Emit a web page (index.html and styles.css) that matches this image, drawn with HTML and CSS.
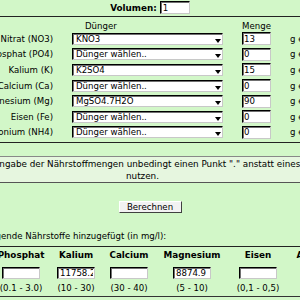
FILE: index.html
```html
<!doctype html>
<html lang="de">
<head>
    <meta charset="UTF-8">
    <title>Dünger-Rechner</title>
    <link rel="stylesheet" href="styles.css">
</head>
<body>
    <div class="page">
        <div class="volume">
            <b>Volumen:</b>
            <input class="box vol-input" type="text" value="1">
        </div>

        <div class="fert">
            <div class="fert-head">
                <span></span>
                <span class="head-duenger">Dünger</span>
                <span class="head-menge">Menge</span>
                <span></span>
            </div>
            <div class="fert-row">
                <label>Nitrat (NO3)</label>
                <span class="pick"><select class="box"><option>KNO3</option></select></span>
                <input class="box amount" type="text" value="13">
                <span class="unit">g einwiegen</span>
            </div>
            <div class="fert-row">
                <label>Phosphat (PO4)</label>
                <span class="pick"><select class="box"><option>Dünger wählen..</option></select></span>
                <input class="box amount" type="text" value="0">
                <span class="unit">g einwiegen</span>
            </div>
            <div class="fert-row">
                <label>Kalium (K)</label>
                <span class="pick"><select class="box"><option>K2SO4</option></select></span>
                <input class="box amount" type="text" value="15">
                <span class="unit">g einwiegen</span>
            </div>
            <div class="fert-row">
                <label>Calcium (Ca)</label>
                <span class="pick"><select class="box"><option>Dünger wählen..</option></select></span>
                <input class="box amount" type="text" value="0">
                <span class="unit">g einwiegen</span>
            </div>
            <div class="fert-row">
                <label>Magnesium (Mg)</label>
                <span class="pick"><select class="box"><option>MgSO4.7H2O</option></select></span>
                <input class="box amount" type="text" value="90">
                <span class="unit">g einwiegen</span>
            </div>
            <div class="fert-row">
                <label>Eisen (Fe)</label>
                <span class="pick"><select class="box"><option>Dünger wählen..</option></select></span>
                <input class="box amount" type="text" value="0">
                <span class="unit">g einwiegen</span>
            </div>
            <div class="fert-row">
                <label>Ammonium (NH4)</label>
                <span class="pick"><select class="box"><option>Dünger wählen..</option></select></span>
                <input class="box amount" type="text" value="0">
                <span class="unit">g einwiegen</span>
            </div>
        </div>

        <div class="note">
            <span class="note-first">Bitte bei der Eingabe der Nährstoffmengen unbedingt einen Punkt "." anstatt eines Kommas zu</span>
            <span class="note-last">nutzen.</span>
        </div>

        <div class="actions">
            <button class="btn" type="button">Berechnen</button>
        </div>

        <p class="result-title">Es wurden folgende Nährstoffe hinzugefügt (in mg/l):</p>

        <div class="results">
            <div class="res res-po">
                <h4>Phosphat</h4>
                <input class="box res-input" type="text" value="">
                <span>(0.1 - 3.0)</span>
            </div>
            <div class="res res-k">
                <h4>Kalium</h4>
                <input class="box res-input" type="text" value="11758.2">
                <span>(10 - 30)</span>
            </div>
            <div class="res res-ca">
                <h4>Calcium</h4>
                <input class="box res-input" type="text" value="">
                <span>(30 - 40)</span>
            </div>
            <div class="res res-mg">
                <h4>Magnesium</h4>
                <input class="box res-input" type="text" value="8874.9">
                <span>(5 - 10)</span>
            </div>
            <div class="res res-fe">
                <h4>Eisen</h4>
                <input class="box res-input" type="text" value="">
                <span>(0,1 - 0,5)</span>
            </div>
            <div class="res res-nh">
                <h4>Ammonium</h4>
                <input class="box res-input" type="text" value="">
                <span>(0 - 0,5)</span>
            </div>
        </div>
    </div>
</body>
</html>
```

FILE: styles.css
```css
*{
    margin:0;
    padding:0;
    box-sizing:border-box;
}
body{
    background:#d2f7c8;
    font-family:"DejaVu Sans", Verdana, sans-serif;
    font-size:8.6px;
    color:#000;
    overflow:hidden;
}
.page{
    width:500px;
    margin-left:-100px;
}

/* eingabefelder im alten windows-look */
.box{
    font-family:inherit;
    font-size:8.6px;
    color:#000;
    background:#fff;
    border:1px solid;
    border-color:#000 #c8c8c8 #c8c8c8 #000;
    box-shadow:inset 1px 1px 0 #707070;
    outline:none;
}

.volume{
    height:17px;
    border-bottom:1px solid #222;
    display:flex;
    justify-content:center;
    align-items:center;
    gap:3px;
    padding-bottom:1px;
}
.volume b{
    font-size:8.8px;
}
.vol-input{
    width:30px;
    height:13px;
    padding:0 2px;
}

.fert{
    padding-bottom:2px;
    border-bottom:1px solid #222;
}
.fert-head,
.fert-row{
    display:grid;
    grid-template-columns:153px 151px 29px 1fr;
    column-gap:19px;
    align-items:center;
}
.fert-head{
    height:14px;
    padding-top:4px;
    line-height:10px;
}
.head-duenger{
    padding-left:13px;
}
.head-menge{
    text-align:center;
}
.fert-row{
    height:15.6px;
}
.fert-row label{
    text-align:right;
    white-space:nowrap;
}
.pick{
    position:relative;
    display:block;
    height:12px;
}
.pick select{
    appearance:none;
    -webkit-appearance:none;
    display:block;
    width:151px;
    height:12px;
    padding:0 0 0 3px;
    line-height:10px;
    border-radius:0;
}
.pick::after{
    content:"";
    position:absolute;
    right:2px;
    top:6px;
    border-left:3px solid transparent;
    border-right:3px solid transparent;
    border-top:4px solid #000;
}
.amount{
    width:29px;
    height:13px;
    padding:0 1px;
}
.unit{
    white-space:nowrap;
    overflow:hidden;
}

.note{
    margin:13px 15px 0 0;
    padding-top:1px;
    border-top:1px solid #888;
    border-bottom:1px solid #555;
    background:#e6f6df;
    text-align:center;
    font-size:8.8px;
    line-height:12px;
    white-space:nowrap;
}
.note span{
    display:block;
}
.note-first{
    padding-left:3px;
}

.actions{
    margin-top:18px;
    text-align:center;
}
.btn{
    height:12px;
    width:63px;
    font-family:inherit;
    font-size:8.6px;
    line-height:10px;
    color:#000;
    background:#f2f2f2;
    border:1px solid;
    border-color:#fff #404040 #404040 #fff;
}

.result-title{
    margin-top:17px;
    padding:0 0 4px 37.5px;
    line-height:12px;
    border-bottom:1px solid #222;
    white-space:nowrap;
}

.results{
    display:flex;
    padding:0 0 2.5px 93px;
    border-bottom:1px solid #333;
}
.res{
    display:flex;
    flex-direction:column;
    align-items:center;
    flex:none;
}
.res h4{
    margin-top:2px;
    font-size:8.8px;
    line-height:12px;
    white-space:nowrap;
}
.res span{
    margin-top:3px;
    line-height:12px;
    white-space:nowrap;
}
.res-input{
    margin-top:5.5px;
    width:38px;
    height:12px;
    padding:0 1px 0 2px;
}
.res-po{ width:56px; }
.res-k{ width:54px; }
.res-ca{ width:52px; }
.res-mg{ width:74px; }
.res-fe{ width:58px; }
.res-nh{ width:75px; }
```
